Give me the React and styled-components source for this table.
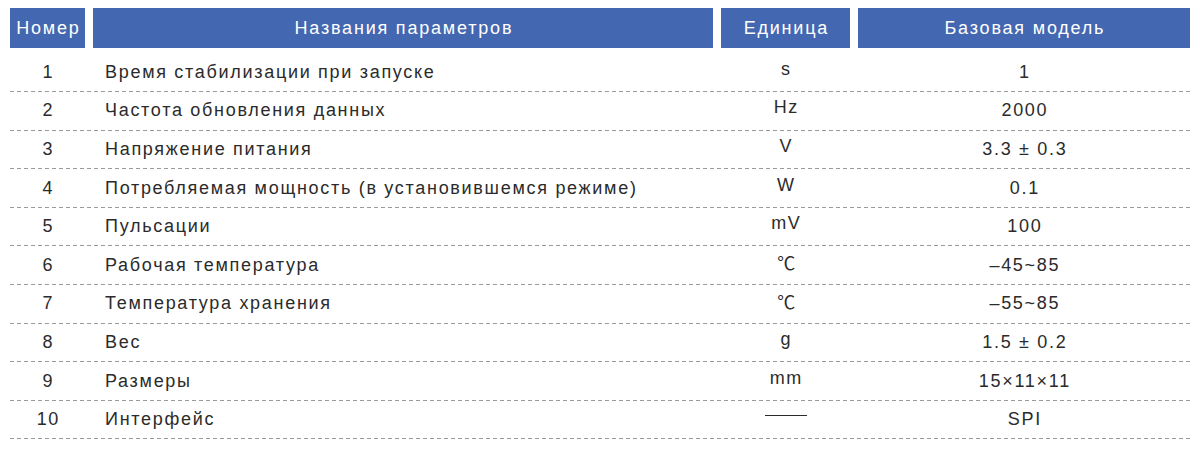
import React from "react";
import styled, { createGlobalStyle } from "styled-components";

const Global = createGlobalStyle`
  html, body { margin: 0; padding: 0; background: #ffffff; }
  body { font-family: "Liberation Sans", Arial, "Noto Sans CJK SC", sans-serif; }
`;

const COLS = "75px 620px 129px 332px";

const Page = styled.div`
  width: 1200px;
  height: 451px;
  box-sizing: border-box;
  padding: 8px 10px 0 10px;
  display: flex;
  flex-direction: column;
`;

const HeaderRow = styled.div`
  display: grid;
  grid-template-columns: ${COLS};
  column-gap: 8px;
  height: 40px;
  margin-bottom: 5.5px;
`;

const HeadCell = styled.div`
  background: #4467b1;
  color: #ffffff;
  font-size: 18px;
  letter-spacing: 1.8px;
  padding-left: 1.8px;
  display: flex;
  align-items: center;
  justify-content: center;
  white-space: nowrap;
`;

const Row = styled.div`
  display: grid;
  grid-template-columns: ${COLS};
  column-gap: 8px;
  height: 38.6px;
  box-sizing: border-box;
  padding-bottom: 1px;
  background-image: repeating-linear-gradient(
    to right,
    #9a9a9a 0px,
    #9a9a9a 4px,
    transparent 4px,
    transparent 7px
  );
  background-size: 100% 1px;
  background-repeat: no-repeat;
  background-position: left bottom;
`;

const Cell = styled.div`
  display: flex;
  align-items: center;
  justify-content: ${(p) => (p.$left ? "flex-start" : "center")};
  padding-left: ${(p) => (p.$left ? "12px" : "1.7px")};
  font-size: 18px;
  letter-spacing: 1.7px;
  color: #2b2b2b;
  white-space: nowrap;
`;

const Dash = styled.span`
  display: inline-block;
  width: 42px;
  height: 1.5px;
  background: #2b2b2b;
  margin-top: -8px;
`;

const Celsius = styled.span`
  font-family: "Noto Sans CJK SC", sans-serif;
  font-size: 18px;
  letter-spacing: 0;
  margin-top: -6px;
`;

const UnitText = styled.span`
  margin-top: -6px;
`;

const rows = [
  ["1", "Время стабилизации при запуске", "s", "1"],
  ["2", "Частота обновления данных", "Hz", "2000"],
  ["3", "Напряжение питания", "V", "3.3 ± 0.3"],
  ["4", "Потребляемая мощность (в установившемся режиме)", "W", "0.1"],
  ["5", "Пульсации", "mV", "100"],
  ["6", "Рабочая температура", "C", "–45~85"],
  ["7", "Температура хранения", "C", "–55~85"],
  ["8", "Вес", "g", "1.5 ± 0.2"],
  ["9", "Размеры", "mm", "15×11×11"],
  ["10", "Интерфейс", "-", "SPI"],
];

function Unit({ value }) {
  if (value === "C") return <Celsius>℃</Celsius>;
  if (value === "-") return <Dash />;
  return <UnitText>{value}</UnitText>;
}

export default function App() {
  return (
    <Page>
      <Global />
      <HeaderRow>
        <HeadCell>Номер</HeadCell>
        <HeadCell>Названия параметров</HeadCell>
        <HeadCell>Единица</HeadCell>
        <HeadCell>Базовая модель</HeadCell>
      </HeaderRow>
      {rows.map((r) => (
        <Row key={r[0]}>
          <Cell>{r[0]}</Cell>
          <Cell $left>{r[1]}</Cell>
          <Cell>
            <Unit value={r[2]} />
          </Cell>
          <Cell>{r[3]}</Cell>
        </Row>
      ))}
    </Page>
  );
}
